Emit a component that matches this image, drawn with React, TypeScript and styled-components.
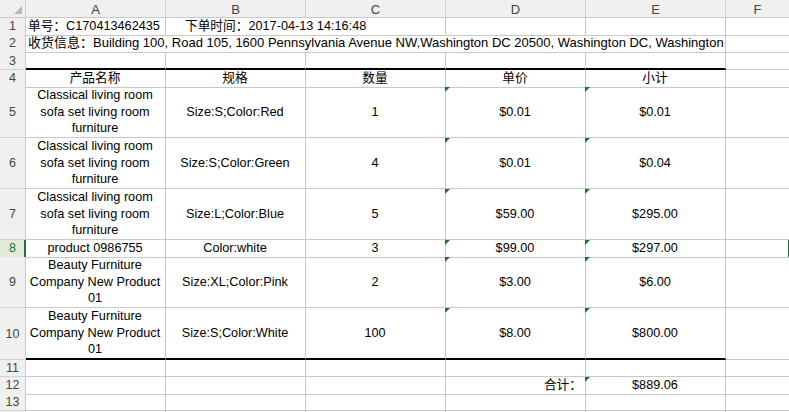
import React from 'react';
import styled, { createGlobalStyle, css } from 'styled-components';

const GRID = '#c8c8c8';
const HEAD_BG = '#f0f0f0';
const HEAD_LINE = '#d2d2d2';
const GREEN = '#217346';
const FLAG = '#137a13';
const COLS = '26px repeat(5, 140px) 64px';

const GlobalStyle = createGlobalStyle`
  html, body {
    margin: 0;
    padding: 0;
    background: #fff;
    overflow: hidden;
  }
  body {
    font-family: "Liberation Sans", Arial, "Noto Sans CJK SC", sans-serif;
  }
`;

const Sheet = styled.div`
  width: 789px;
  height: 412px;
  overflow: hidden;
  display: flex;
  flex-direction: column;
`;

const Row = styled.div<{ $h: number }>`
  display: grid;
  grid-template-columns: ${COLS};
  height: ${p => p.$h}px;
  flex: none;
`;

// top-left corner box with the little select-all triangle
const Corner = styled.div`
  background: ${HEAD_BG};
  border-right: 1px solid ${HEAD_LINE};
  border-bottom: 1px solid ${GRID};
  display: flex;
  align-items: flex-end;
  justify-content: flex-end;
  padding: 0 3px 3px 0;
  box-sizing: border-box;
`;

const ColHead = styled.div`
  background: ${HEAD_BG};
  border-right: 1px solid ${HEAD_LINE};
  border-bottom: 1px solid ${GRID};
  box-sizing: border-box;
  display: flex;
  align-items: center;
  justify-content: center;
  padding-top: 2px;
  font-size: 13px;
  color: #444;
`;

const RowHead = styled.div<{ $sel?: boolean }>`
  background: ${p => (p.$sel ? '#e1ead9' : HEAD_BG)};
  border-right: 1px solid ${p => (p.$sel ? GREEN : GRID)};
  border-bottom: 1px solid ${HEAD_LINE};
  box-sizing: border-box;
  display: flex;
  align-items: center;
  justify-content: center;
  font-size: 12.5px;
  color: ${p => (p.$sel ? GREEN : '#444')};
  ${p =>
    p.$sel &&
    css`
      box-shadow: inset -1px 0 0 ${GREEN};
    `}
`;

type Align = 'left' | 'center' | 'right';

const Cell = styled.div<{
  $span?: number;
  $align?: Align;
  $thick?: boolean;
  $flag?: boolean;
  $wrap?: boolean;
  $indent?: number;
  $size?: number;
  $active?: boolean;
}>`
  position: relative;
  grid-column: span ${p => p.$span ?? 1};
  box-sizing: border-box;
  border-right: 1px solid ${GRID};
  border-bottom: ${p => (p.$thick ? '2px solid #000' : `1px solid ${GRID}`)};
  display: flex;
  align-items: center;
  justify-content: ${p =>
    p.$align === 'center' ? 'center' : p.$align === 'right' ? 'flex-end' : 'flex-start'};
  text-align: ${p => p.$align ?? 'left'};
  padding: 0 3px 0 ${p => p.$indent ?? 2}px;
  font-size: ${p => p.$size ?? 12.7}px;
  line-height: 16.5px;
  color: #000;
  white-space: ${p => (p.$wrap ? 'normal' : 'nowrap')};
  ${p =>
    p.$active &&
    css`
      box-shadow: inset -1px 0 0 ${GREEN};
    `}
  ${p =>
    p.$flag &&
    css`
      &::before {
        content: '';
        position: absolute;
        top: 0;
        left: -1px;
        border-top: 5px solid ${FLAG};
        border-right: 5px solid transparent;
      }
    `}
`;

const items = [
  { name: 'Classical living room sofa set living room furniture', spec: 'Size:S;Color:Red', qty: '1', price: '$0.01', sub: '$0.01' },
  { name: 'Classical living room sofa set living room furniture', spec: 'Size:S;Color:Green', qty: '4', price: '$0.01', sub: '$0.04' },
  { name: 'Classical living room sofa set living room furniture', spec: 'Size:L;Color:Blue', qty: '5', price: '$59.00', sub: '$295.00' },
  { name: 'product 0986755', spec: 'Color:white', qty: '3', price: '$99.00', sub: '$297.00' },
  { name: 'Beauty Furniture Company New Product 01', spec: 'Size:XL;Color:Pink', qty: '2', price: '$3.00', sub: '$6.00' },
  { name: 'Beauty Furniture Company New Product 01', spec: 'Size:S;Color:White', qty: '100', price: '$8.00', sub: '$800.00' },
];

const EmptyRow = ({ n, h = 17 }: { n?: number; h?: number }) => (
  <Row $h={h}>
    <RowHead>{n}</RowHead>
    <Cell />
    <Cell />
    <Cell />
    <Cell />
    <Cell />
    <Cell />
  </Row>
);

export default function App() {
  return (
    <>
      <GlobalStyle />
      <Sheet>
        <Row $h={18}>
          <Corner>
            <svg width="8" height="8" viewBox="0 0 8 8">
              <polygon points="8,0 8,8 0,8" fill="#b9b9b9" />
            </svg>
          </Corner>
          {['A', 'B', 'C', 'D', 'E', 'F'].map(c => (
            <ColHead key={c}>{c}</ColHead>
          ))}
        </Row>

        <Row $h={17}>
          <RowHead>1</RowHead>
          <Cell>单号：C170413462435</Cell>
          <Cell $span={2} $indent={19}>下单时间：2017-04-13 14:16:48</Cell>
          <Cell />
          <Cell />
          <Cell />
        </Row>

        <Row $h={17}>
          <RowHead>2</RowHead>
          <Cell $span={5} $size={13}>
            收货信息：Building 100, Road 105, 1600 Pennsylvania Avenue NW,Washington DC 20500, Washington DC, Washington
          </Cell>
          <Cell />
        </Row>

        <Row $h={18}>
          <RowHead>3</RowHead>
          <Cell $thick />
          <Cell $thick />
          <Cell $thick />
          <Cell $thick />
          <Cell $thick />
          <Cell />
        </Row>

        <Row $h={17}>
          <RowHead>4</RowHead>
          <Cell $align="center">产品名称</Cell>
          <Cell $align="center">规格</Cell>
          <Cell $align="center">数量</Cell>
          <Cell $align="center">单价</Cell>
          <Cell $align="center">小计</Cell>
          <Cell />
        </Row>

        {items.map((it, i) => {
          const n = i + 5;
          const short = it.name.length < 20;
          const last = i === items.length - 1;
          return (
            <Row key={n} $h={short ? 17 : last ? 52 : 51}>
              <RowHead $sel={n === 8}>{n}</RowHead>
              <Cell $align="center" $wrap $thick={last}>{it.name}</Cell>
              <Cell $align="center" $thick={last}>{it.spec}</Cell>
              <Cell $align="center" $thick={last}>{it.qty}</Cell>
              <Cell $align="center" $flag $thick={last}>{it.price}</Cell>
              <Cell $align="center" $flag $thick={last}>{it.sub}</Cell>
              <Cell $active={n === 8} />
            </Row>
          );
        })}

        <EmptyRow n={11} />

        <Row $h={17}>
          <RowHead>12</RowHead>
          <Cell />
          <Cell />
          <Cell />
          <Cell $align="right">合计：</Cell>
          <Cell $align="center" $flag>$889.06</Cell>
          <Cell />
        </Row>

        <EmptyRow n={13} />
        <EmptyRow />
      </Sheet>
    </>
  );
}
